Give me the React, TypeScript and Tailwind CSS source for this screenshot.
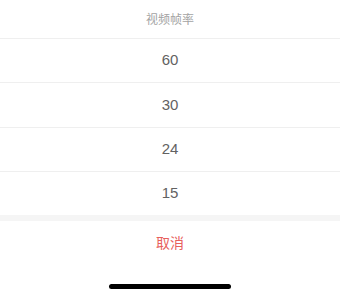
import React from "react";

const font = { fontFamily: '"Noto Sans CJK SC", "Liberation Sans", sans-serif' };

export default function App() {
  const rates = ["60", "30", "24", "15"];
  return (
    <div className="w-[340px] h-[297px] bg-white flex flex-col" style={font}>
      <div className="h-[38px] flex items-center justify-center text-[12px] text-[#a3a3a3]">
        视频帧率
      </div>
      {rates.map((r) => (
        <div
          key={r}
          className="h-[44.3px] border-t border-[#efefef] flex items-center justify-center text-[15px] text-[#626262] [font-family:'Liberation_Sans',sans-serif]"
        >
          {r}
        </div>
      ))}
      <div className="h-[6px] bg-[#f5f5f5]" />
      <div className="h-[43px] flex items-center justify-center text-[14px] text-[#e8605c]">
        取消
      </div>
      <div className="flex-1 flex items-end justify-center pb-[8px]">
        <div className="w-[122px] h-[5px] rounded-full bg-black" />
      </div>
    </div>
  );
}
